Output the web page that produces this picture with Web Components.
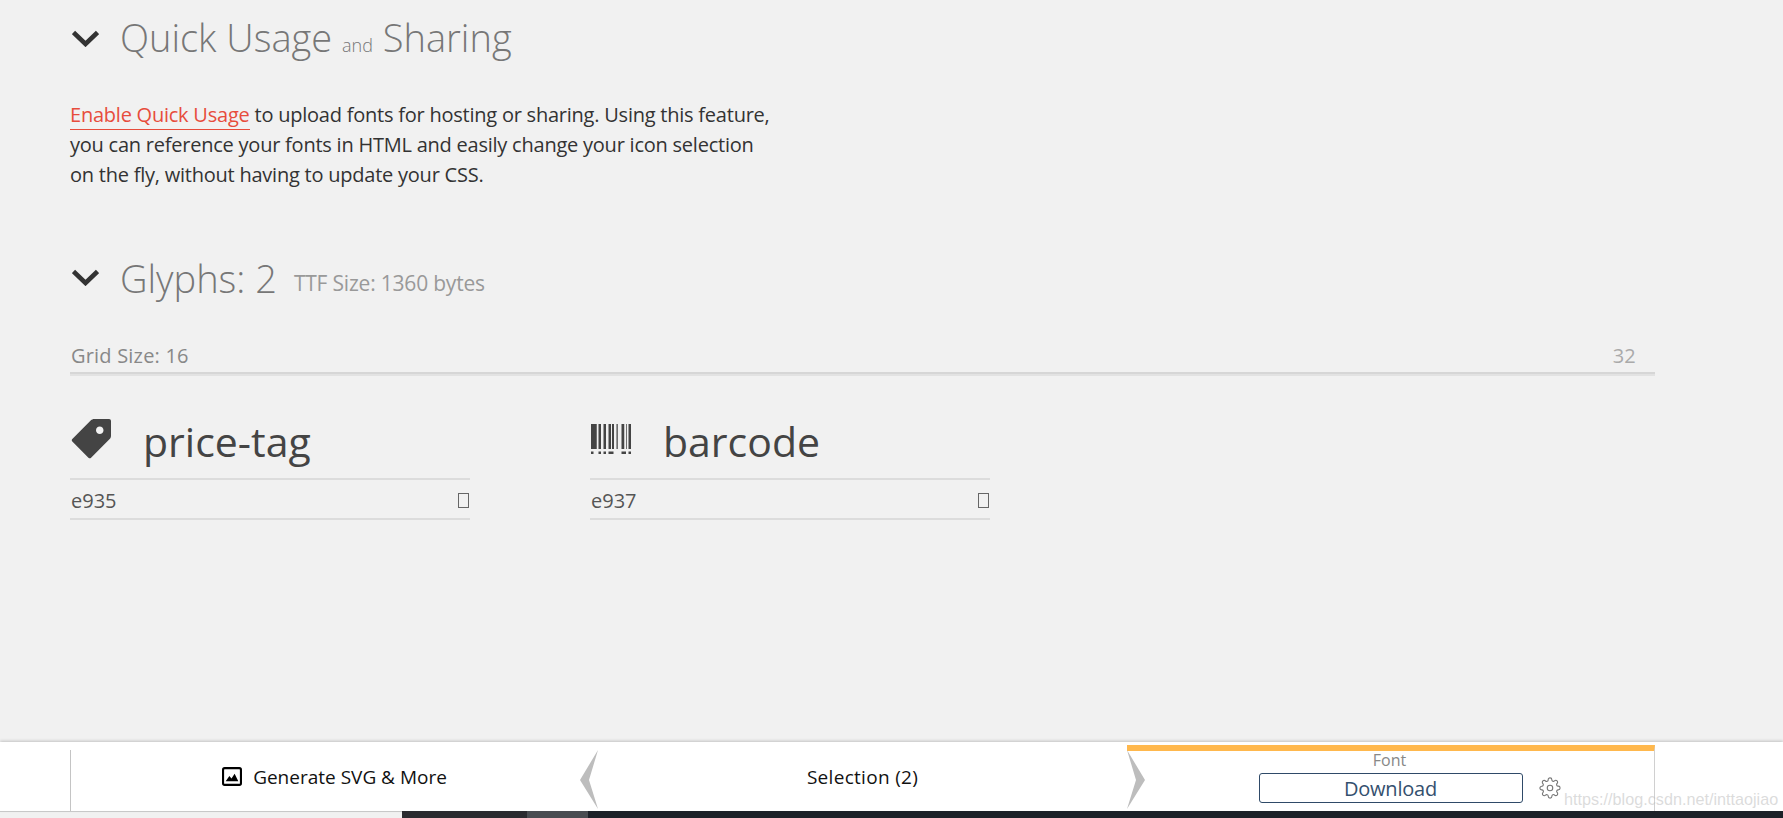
<!DOCTYPE html>
<html>
<head>
<meta charset="utf-8">
<title>IcoMoon</title>
<style>
  html, body { margin: 0; height: 100%; overflow: hidden; }
  body { background: #f1f1f1; font-family: "Open Sans", "Noto Sans", sans-serif; display: flex; flex-direction: column; }
  .grow { flex: 1; min-height: 0; }
</style>
</head>
<body>
<section-head style="--top: 13px; --nudge: 3px">Quick Usage <small>and</small> Sharing</section-head>
<quick-note></quick-note>
<section-head style="--top: 62px; --nudge: 1px">Glyphs: 2<span slot="aside">TTF Size: 1360 bytes</span></section-head>
<grid-size></grid-size>
<glyph-list>
  <glyph-card name="price-tag" code="e935" icon="tag"></glyph-card>
  <glyph-card name="barcode" code="e937" icon="barcode"></glyph-card>
</glyph-list>
<div class="grow"></div>
<footer-bar></footer-bar>

<script>
class SectionHead extends HTMLElement {
  connectedCallback() {
    this.attachShadow({ mode: 'open' });
    this.shadowRoot.innerHTML = `
      <style>
        :host { display: flex; align-items: center; padding: var(--top) 0 0 72px; height: 50px; }
        svg { width: 27px; height: 17px; margin-right: 21px; flex: none; }
        .title { font-size: 38px; font-weight: 300; color: #777; line-height: 50px; white-space: pre-wrap; position: relative; top: var(--nudge); }
        ::slotted([slot="aside"]) { font-size: 21px; color: #999; font-weight: 400; margin-left: 17px; letter-spacing: -.2px; position: relative; top: 6px; }
        ::slotted(small) { font-size: 18px; }
      </style>
      <svg viewBox="0 0 27 17"><polyline points="1.5,2.5 13.5,14 25.5,2.5" fill="none" stroke="#333" stroke-width="4.6"/></svg>
      <span class="title"><slot></slot></span><slot name="aside"></slot>`;
  }
}

class QuickNote extends HTMLElement {
  connectedCallback() {
    this.attachShadow({ mode: 'open' });
    this.shadowRoot.innerHTML = `
      <style>
        :host { display: block; margin: 37px 0 0 70px; width: 760px; font-size: 20px; line-height: 30px; color: #333; letter-spacing: -.23px; }
        a { color: #e74c3c; text-decoration: none; border-bottom: 1px solid #e74c3c; padding-bottom: 1px; }
      </style>
      <a>Enable Quick Usage</a> to upload fonts for hosting or sharing. Using this feature,<br>
      you can reference your fonts in HTML and easily change your icon selection<br>
      on the fly, without having to update your CSS.`;
  }
}

class GridSize extends HTMLElement {
  connectedCallback() {
    this.attachShadow({ mode: 'open' });
    this.shadowRoot.innerHTML = `
      <style>
        :host { display: flex; justify-content: space-between; margin: 37px 128px 2px 70px; padding: 0 19px 0 1px; height: 33px; line-height: 33px; font-size: 20px; letter-spacing: .2px; color: #888; border-bottom: 2px solid #d6d6d6; box-shadow: 0 2px 0 #e2e2e2; }
        .max { color: #aaa; }
      </style>
      <span>Grid Size: 16</span><span class="max">32</span>`;
  }
}

class GlyphList extends HTMLElement {
  connectedCallback() {
    this.attachShadow({ mode: 'open' });
    this.shadowRoot.innerHTML = `
      <style>:host { display: flex; gap: 120px; margin: 42px 0 0 70px; }</style>
      <slot></slot>`;
  }
}

const GLYPHS = {
  tag: '<path fill="#444" d="M15.25 0h-6c-0.412 0-0.989 0.239-1.28 0.53l-7.439 7.439c-0.292 0.292-0.292 0.769 0 1.061l6.439 6.439c0.292 0.292 0.769 0.292 1.061 0l7.439-7.439c0.292-0.292 0.53-0.868 0.53-1.28v-6c0-0.412-0.338-0.75-0.75-0.75zM11.5 6c-0.828 0-1.5-0.672-1.5-1.5s0.672-1.5 1.5-1.5 1.5 0.672 1.5 1.5-0.672 1.5-1.5 1.5z"/>',
  barcode: '<path fill="#444" d="M0 2h2.3v10h-2.3zM3 2h1v10h-1zM5 2h1v10h-1zM7 2h1v10h-1zM8.4 2h.8v10h-.8zM10.2 2h.5v10h-.5zM12.2 2h1.1v10h-1.1zM14.1 2h.3v10h-.3zM15 2h1v10h-1zM0 13h1v1h-1zM3 13h1v1h-1zM5 13h1v1h-1zM7 13h2v1h-2zM12.2 13h1.8v1h-1.8zM15 13h1v1h-1z"/>'
};

class GlyphCard extends HTMLElement {
  connectedCallback() {
    this.attachShadow({ mode: 'open' });
    this.shadowRoot.innerHTML = `
      <style>
        :host { display: block; width: 400px; }
        .top { display: flex; align-items: center; height: 60px; border-bottom: 2px solid #dcdcdc; padding-left: 1px; }
        svg { width: 40px; height: 40px; margin-right: 32px; flex: none; position: relative; top: -9px; }
        .name { font-size: 41px; line-height: 60px; color: #444; position: relative; top: -7px; }
        .bottom { display: flex; justify-content: space-between; align-items: center; box-sizing: border-box; height: 38px; padding: 2px 1px 0; border-bottom: 0; font-size: 20px; color: #555; }
        .rule { height: 2px; background: #dcdcdc; }
        .tofu { width: 9px; height: 13px; border: 1px solid #666; }
      </style>
      <div class="top"><svg viewBox="0 0 16 16">${GLYPHS[this.getAttribute('icon')]}</svg><span class="name">${this.getAttribute('name')}</span></div>
      <div class="bottom"><span>${this.getAttribute('code')}</span><span class="tofu"></span></div>
      <div class="rule"></div>`;
  }
}

class FooterBar extends HTMLElement {
  connectedCallback() {
    this.attachShadow({ mode: 'open' });
    this.shadowRoot.innerHTML = `
      <style>
        :host { display: block; font-size: 19px; color: #111; position: relative; }
        .bar { height: 69px; background: #fff; box-shadow: 0 -1px 3px rgba(0,0,0,.2); display: grid; grid-template-columns: 528px 529px 528px; padding-left: 70px; }
        .col { position: relative; display: flex; align-items: center; justify-content: center; }
        .first { margin-top: 8px; height: 61px; box-sizing: border-box; border-left: 1px solid #c4c4c4; }
        .first span { position: relative; top: -4px; display: flex; align-items: center; gap: 11px; }
        .second { letter-spacing: .3px; }
        .last { margin-top: 3px; border-top: 6px solid #ffb84d; border-right: 1px solid #d0d0d0; flex-direction: column; justify-content: flex-start; padding-right: 2px; }
        .arrow { position: absolute; width: 18px; height: 59px; }
        .arrow.l { right: 0; top: 0; }
        .arrow.r { left: 0; top: 0; }
        .label { font-size: 16px; line-height: 22px; color: #888; margin-top: -2px; }
        .row { display: flex; align-items: center; margin-left: 40px; margin-top: 2px; }
        button { width: 264px; height: 30px; padding: 0; background: #fff; border: 1px solid #2f4a68; border-radius: 3px; font: 20px "Open Sans", sans-serif; letter-spacing: -.2px; color: #34506e; }
        .row svg { width: 22px; height: 22px; margin-left: 16px; }
        .strip { height: 7px; background: #1c2128; margin-left: 402px; display: flex; }
        .strip i { width: 125px; background: #2b2b30; }
        .strip b { width: 61px; background: #4a4d52; }
        .below { position: absolute; left: 0; bottom: 6px; width: 402px; height: 1px; background: #c8c8c8; }
        .mark { position: absolute; left: 1564px; bottom: 9px; font: 16.2px "Liberation Sans", sans-serif; color: rgba(190,190,190,.55); white-space: nowrap; }
      </style>
      <div class="bar">
        <div class="col first">
          <span><svg width="20" height="19" viewBox="0 0 19 18"><rect x="1" y="1" width="17" height="16" rx="1.5" fill="none" stroke="#000" stroke-width="2"/><path d="M3.5 13.5l3.5-5 2 2.5 3-4.5 3.5 7z" fill="#000"/></svg>Generate SVG &amp; More</span>
          <svg class="arrow l" viewBox="0 0 18 59"><polygon points="18,0 0,30 18,59 9,30" fill="#bdbdbd"/></svg>
        </div>
        <div class="col second">Selection (2)</div>
        <div class="col last">
          <svg class="arrow r" viewBox="0 0 18 59" style="top:-1px"><polygon points="0,0 18,30 0,59 9,30" fill="#bdbdbd"/></svg>
          <div class="label">Font</div>
          <div class="row"><button>Download</button>
            <svg viewBox="0 0 24 24" fill="none" stroke="#777" stroke-width="1.2"><circle cx="12" cy="12" r="3"/><path d="M19.4 15a1.65 1.65 0 0 0 .33 1.82l.06.06a2 2 0 0 1 0 2.83 2 2 0 0 1-2.83 0l-.06-.06a1.65 1.65 0 0 0-1.82-.33 1.65 1.65 0 0 0-1 1.51V21a2 2 0 0 1-2 2 2 2 0 0 1-2-2v-.09A1.65 1.65 0 0 0 9 19.4a1.65 1.65 0 0 0-1.82.33l-.06.06a2 2 0 0 1-2.83 0 2 2 0 0 1 0-2.83l.06-.06a1.65 1.65 0 0 0 .33-1.82 1.65 1.65 0 0 0-1.51-1H3a2 2 0 0 1-2-2 2 2 0 0 1 2-2h.09A1.65 1.65 0 0 0 4.6 9a1.65 1.65 0 0 0-.33-1.82l-.06-.06a2 2 0 0 1 0-2.83 2 2 0 0 1 2.83 0l.06.06a1.65 1.65 0 0 0 1.82.33H9a1.65 1.65 0 0 0 1-1.51V3a2 2 0 0 1 2-2 2 2 0 0 1 2 2v.09a1.65 1.65 0 0 0 1 1.51 1.65 1.65 0 0 0 1.82-.33l.06-.06a2 2 0 0 1 2.83 0 2 2 0 0 1 0 2.83l-.06.06a1.65 1.65 0 0 0-.33 1.82V9a1.65 1.65 0 0 0 1.51 1H21a2 2 0 0 1 2 2 2 2 0 0 1-2 2h-.09a1.65 1.65 0 0 0-1.51 1z"/></svg>
          </div>
        </div>
      </div>
      <div class="strip"><i></i><b></b></div>
      <div class="below"></div>
      <div class="mark">https://blog.csdn.net/inttaojiao</div>`;
  }
}

customElements.define('section-head', SectionHead);
customElements.define('quick-note', QuickNote);
customElements.define('grid-size', GridSize);
customElements.define('glyph-list', GlyphList);
customElements.define('glyph-card', GlyphCard);
customElements.define('footer-bar', FooterBar);
</script>
</body>
</html>
